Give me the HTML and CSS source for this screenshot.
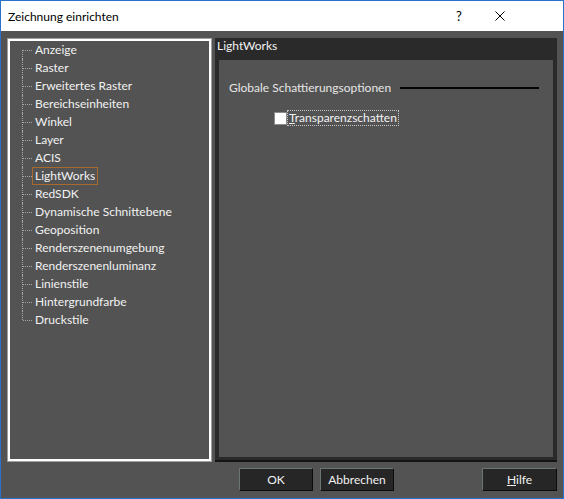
FILE: index.html
```html
<!DOCTYPE html>
<html lang="de">
<head>
<meta charset="utf-8">
<title>Zeichnung einrichten</title>
<link rel="stylesheet" href="styles.css">
</head>
<body>
<div class="window">
  <div class="titlebar">
    <span class="title">Zeichnung einrichten</span>
    <span class="help">?</span>
    <span class="close"><svg width="10" height="10" viewBox="0 0 10 10"><path d="M0.5 0.5 L9.5 9.5 M9.5 0.5 L0.5 9.5" stroke="#000" stroke-width="1" fill="none"/></svg></span>
  </div>
  <div class="body">
    <div class="main">
      <div class="tree">
        <ul class="tree-list">
          <li><span class="node">Anzeige</span></li>
          <li><span class="node">Raster</span></li>
          <li><span class="node">Erweitertes Raster</span></li>
          <li><span class="node">Bereichseinheiten</span></li>
          <li><span class="node">Winkel</span></li>
          <li><span class="node">Layer</span></li>
          <li><span class="node">ACIS</span></li>
          <li><span class="node selected">LightWorks</span></li>
          <li><span class="node">RedSDK</span></li>
          <li><span class="node">Dynamische Schnittebene</span></li>
          <li><span class="node">Geoposition</span></li>
          <li><span class="node">Renderszenenumgebung</span></li>
          <li><span class="node">Renderszenenluminanz</span></li>
          <li><span class="node">Linienstile</span></li>
          <li><span class="node">Hintergrundfarbe</span></li>
          <li><span class="node">Druckstile</span></li>
        </ul>
      </div>
      <div class="page">
        <div class="page-title">LightWorks</div>
        <div class="page-inner">
          <div class="group">
            <span class="group-label">Globale Schattierungsoptionen</span>
            <span class="rule"></span>
          </div>
          <div class="check">
            <span class="box"></span>
            <span class="check-label"><u>T</u>ransparenzschatten</span>
          </div>
        </div>
      </div>
    </div>
    <div class="buttons">
      <button class="btn btn-ok">OK</button>
      <button class="btn">Abbrechen</button>
      <button class="btn btn-help"><u>H</u>ilfe</button>
    </div>
  </div>
</div>
</body>
</html>
```
FILE: styles.css
```css
* { box-sizing: border-box; }
html, body { margin: 0; padding: 0; }
body {
  font-family: Lato, "Liberation Sans", sans-serif;
  font-size: 12px;
  background: #535353;
}
.window {
  width: 564px;
  height: 499px;
  border: 1px solid #2b73c9;
  background: #535353;
  display: flex;
  flex-direction: column;
}
.titlebar {
  height: 30px;
  background: #fff;
  display: flex;
  align-items: center;
  color: #000;
  flex: none;
}
.title {
  flex: 1;
  padding-left: 7px;
  font-size: 12px;
}
.help {
  width: 20px;
  text-align: center;
  font-size: 13px;
}
.close {
  width: 20px;
  margin-left: 21px;
  margin-right: 53px;
  display: flex;
  justify-content: center;
  align-items: center;
}
.close svg { display: block; }
.body {
  flex: 1;
  display: flex;
  flex-direction: column;
  padding: 7px 6px 7px 6px;
}
.main {
  display: flex;
  height: 424px;
  gap: 3px;
}
.tree {
  width: 205px;
  border: 1px solid #a0a0a0;
  box-shadow: inset 0 0 0 2px #ffffff;
  padding: 2px;
  background: #535353;
}
.tree-list {
  list-style: none;
  margin: 0;
  padding: 0;
}
.tree-list li {
  position: relative;
  height: 18px;
  padding-left: 22px;
  display: flex;
  align-items: center;
}
.tree-list li::before {
  content: "";
  position: absolute;
  left: 12px;
  top: 0;
  bottom: 0;
  border-left: 1px dotted #a8a8a8;
}
.tree-list li:first-child::before { top: 9px; }
.tree-list li:last-child::before { bottom: 9px; }
.tree-list li::after {
  content: "";
  position: absolute;
  left: 13px;
  top: 9px;
  width: 9px;
  border-top: 1px dotted #a8a8a8;
}
.node {
  display: block;
  height: 18px;
  line-height: 16px;
  border: 1px solid transparent;
  padding: 0 2px;
  color: #f2f2f2;
  white-space: nowrap;
}
.node.selected {
  border-color: #a8692e;
}
.page {
  flex: 1;
  background: #2a2a2a;
  display: flex;
  flex-direction: column;
  border-bottom: 2px solid #141414;
}
.page-title {
  height: 22px;
  line-height: 16px;
  padding-left: 2px;
  color: #f2f2f2;
}
.page-inner {
  flex: 1;
  background: #535353;
  margin: 0 4px 3px 4px;
  padding-top: 20px;
}
.group {
  display: flex;
  align-items: center;
  height: 16px;
  padding-left: 10px;
  padding-right: 14px;
}
.group-label {
  color: #e6e6e6;
  line-height: 16px;
  white-space: nowrap;
}
.rule {
  flex: 1;
  height: 2px;
  background: #050505;
  margin-left: 9px;
}
.check {
  display: flex;
  align-items: center;
  margin-top: 14px;
  padding-left: 55px;
  height: 16px;
}
.box {
  width: 13px;
  height: 13px;
  background: #ffffff;
  border: 1px solid #8a8a8a;
}
.check-label {
  margin-left: 0;
  border: 1px dotted #c8c8c8;
  padding: 0 1px;
  line-height: 14px;
  color: #f2f2f2;
}
.buttons {
  display: flex;
  margin-top: 6px;
  height: 23px;
  gap: 7px;
}
.btn {
  width: 74px;
  height: 23px;
  background: #262626;
  color: #f2f2f2;
  font-family: inherit;
  font-size: 12px;
  border: 1px solid;
  border-color: #6b7575 #0c0c0c #0c0c0c #6b7575;
  padding: 0;
  text-align: center;
}
.btn-ok { margin-left: 232px; width: 74px; }
.btn-help { margin-left: auto; width: 75px; }
```
